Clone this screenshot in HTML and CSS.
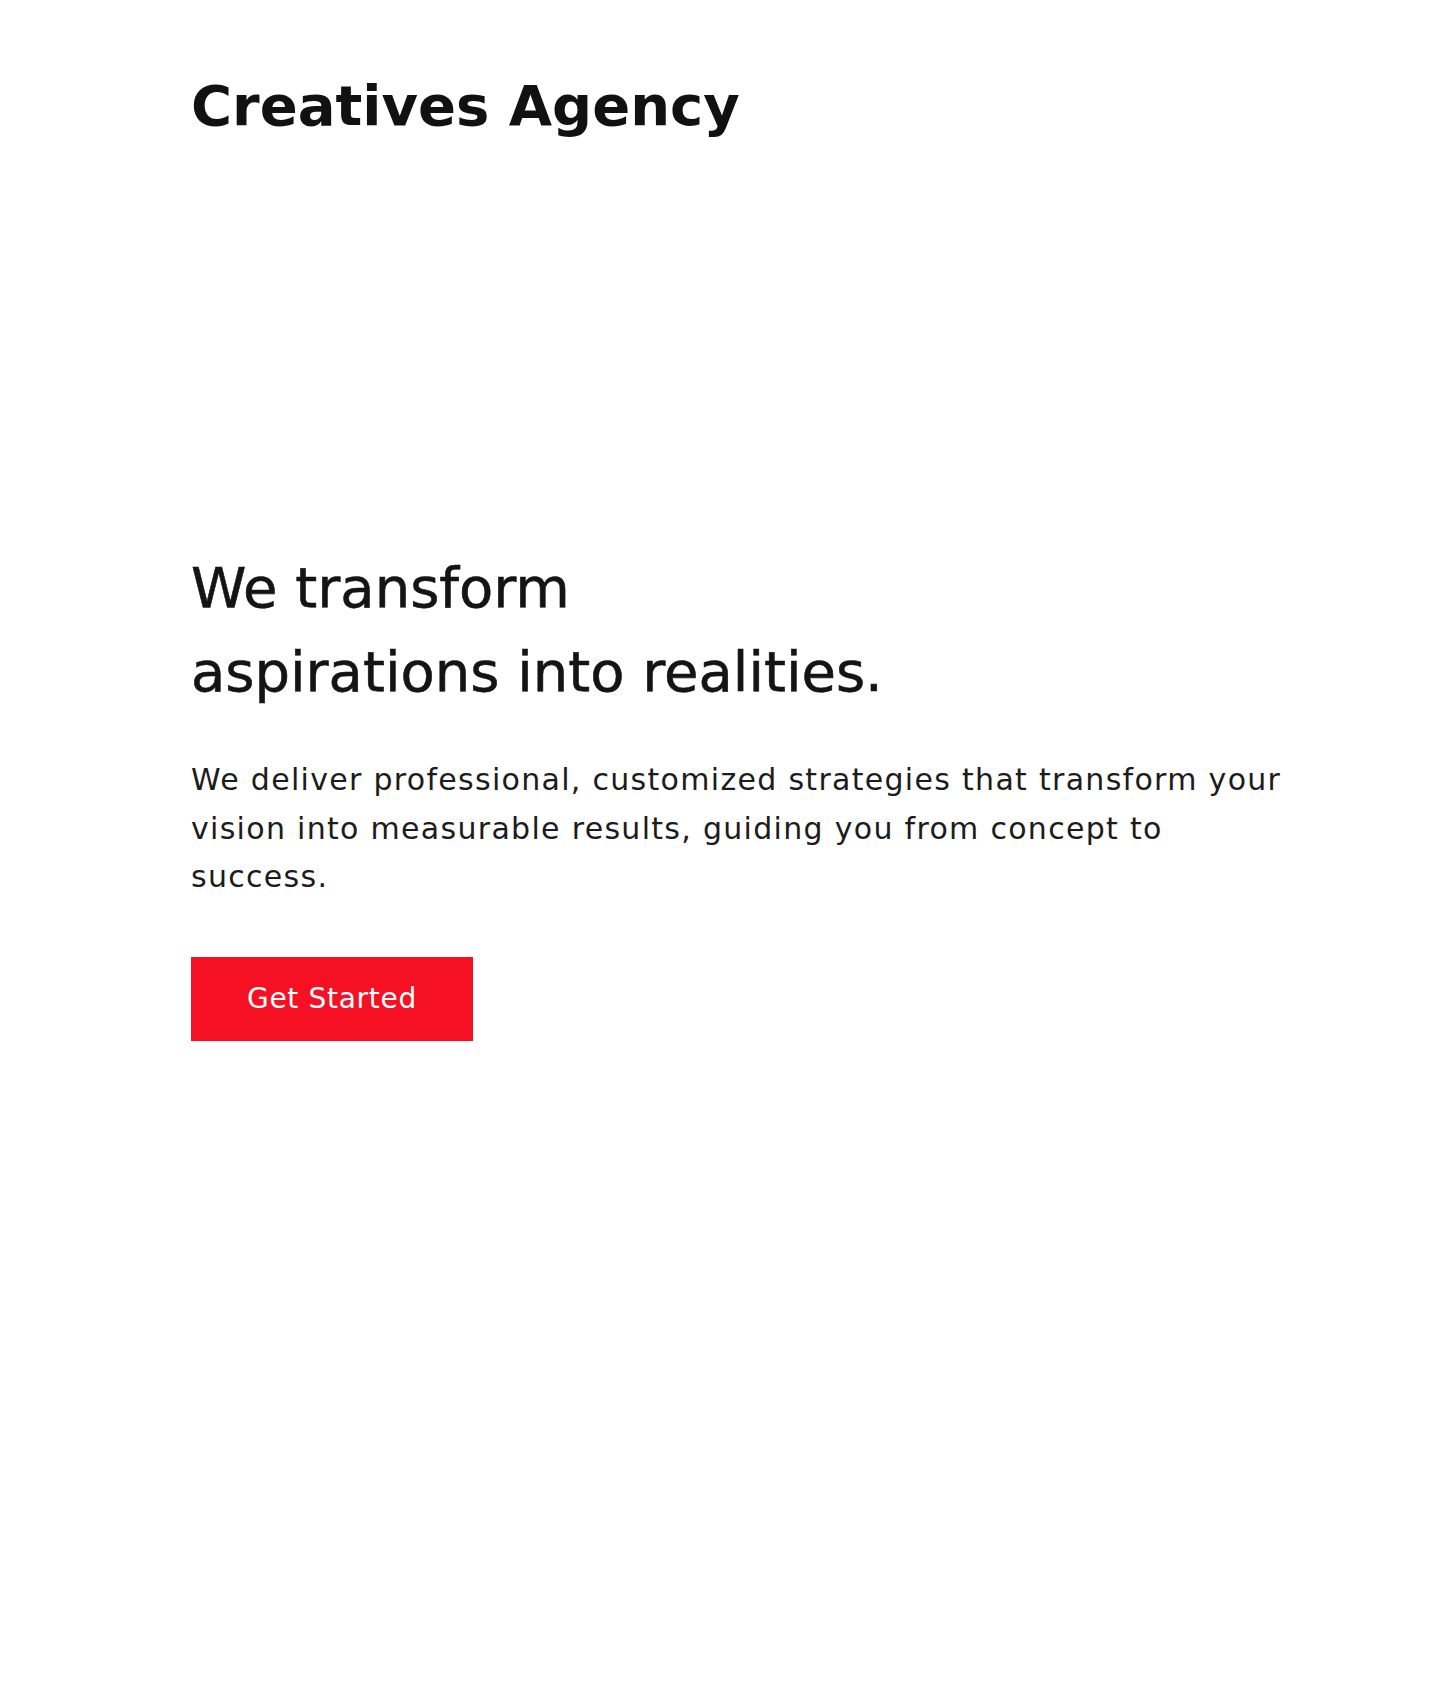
FILE: index.html
```html
<!DOCTYPE html>
<html lang="en">
<head>
<meta charset="utf-8">
<title>Creatives Agency</title>
<link rel="stylesheet" href="styles.css">
</head>
<body>
<div class="page">
  <header class="site-header">
    <h1 class="brand">Creatives Agency</h1>
  </header>
  <section class="hero">
    <h2 class="hero-title">We transform<br>aspirations into realities.</h2>
    <p class="hero-text">We deliver professional, customized strategies that transform your vision into measurable results, guiding you from concept to success.</p>
    <a class="btn-primary" href="#">Get Started</a>
  </section>
</div>
</body>
</html>
```
FILE: styles.css
```css
html, body {
  margin: 0;
  padding: 0;
  background: #ffffff;
}
body {
  font-family: "DejaVu Sans", "Noto Sans", sans-serif;
  color: #141414;
}
.page {
  padding: 73px 0 0 191px;
  min-height: 1700px;
  box-sizing: border-box;
}
.site-header {
  display: flex;
}
.brand {
  margin: 0;
  font-size: 56px;
  font-weight: 700;
  line-height: 66px;
  color: #111111;
}
.hero {
  display: flex;
  flex-direction: column;
  align-items: flex-start;
  margin-top: 407px;
}
.hero-title {
  margin: 0;
  font-size: 56px;
  font-weight: 500;
  line-height: 84px;
  color: #141414;
  -webkit-text-stroke: 0.6px #141414;
}
.hero-text {
  margin: 42px 0 0 0;
  max-width: 1110px;
  font-size: 30px;
  letter-spacing: 1.3px;
  line-height: 48.5px;
  color: #1c1c1c;
}
.btn-primary {
  margin-top: 55px;
  display: inline-block;
  background: #f51023;
  color: #ffffff;
  text-decoration: none;
  font-size: 28px;
  letter-spacing: 0.7px;
  line-height: 28px;
  padding: 28px 56px;
}
```
